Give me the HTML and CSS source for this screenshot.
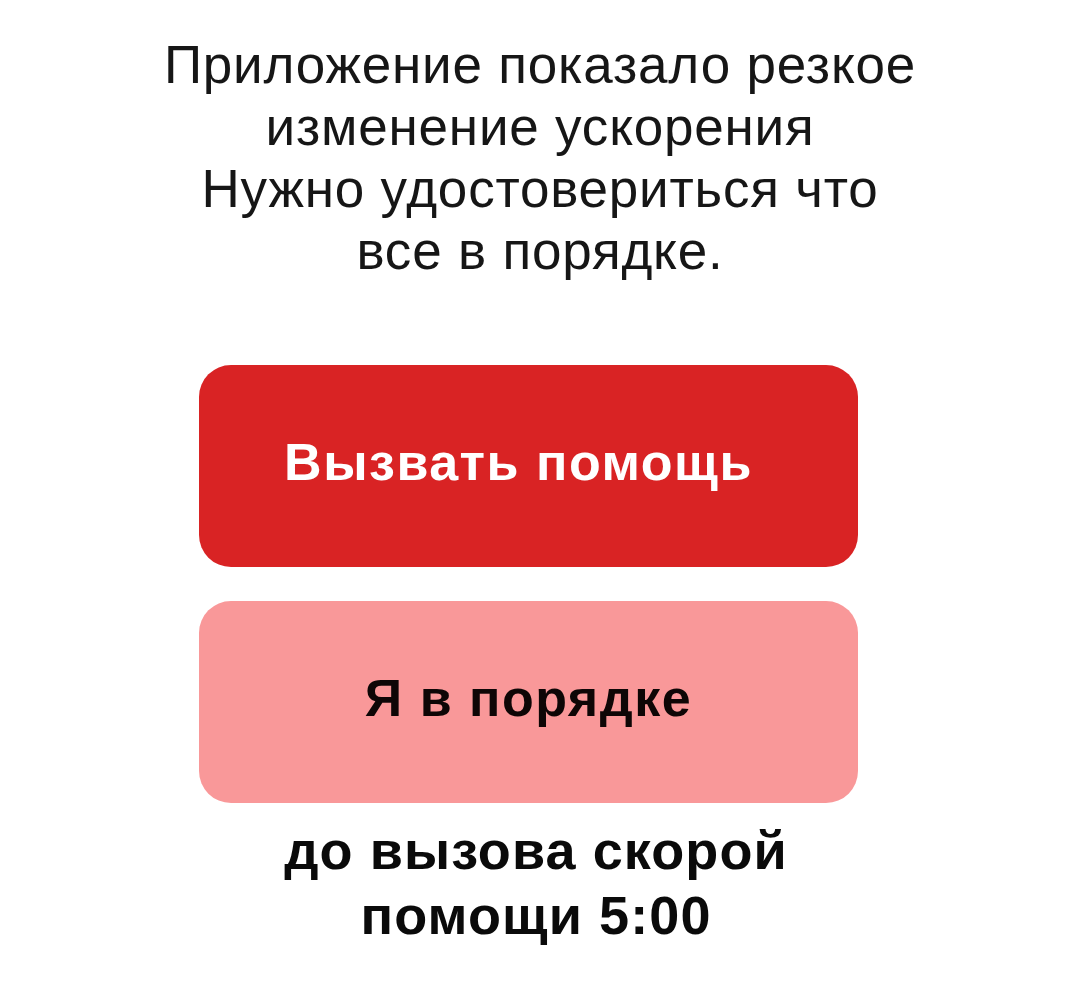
FILE: index.html
```html
<!DOCTYPE html>
<html lang="ru">
<head>
<meta charset="utf-8">
<title>Резкое изменение ускорения</title>
<link rel="stylesheet" href="styles.css">
</head>
<body>
<main class="screen">
  <p class="message">Приложение показало резкое<br>изменение ускорения<br>Нужно удостовериться что<br>все в порядке.</p>
  <div class="actions">
    <button class="btn btn-danger" type="button">Вызвать помощь</button>
    <button class="btn btn-soft" type="button">Я в порядке</button>
  </div>
  <p class="countdown">до вызова скорой<br>помощи 5:00</p>
</main>
</body>
</html>
```

FILE: styles.css
```css
* { box-sizing: border-box; }
html, body { margin: 0; padding: 0; background: #ffffff; }
body {
  width: 1080px;
  height: 982px;
  overflow: hidden;
  font-family: "Liberation Sans", Arial, sans-serif;
  color: #111111;
}
.screen {
  display: flex;
  flex-direction: column;
  align-items: center;
  padding-top: 34px;
}
.message {
  margin: 0;
  font-size: 53px;
  line-height: 62px;
  text-align: center;
  color: #161616;
  letter-spacing: 0.8px;
}
.actions {
  display: flex;
  flex-direction: column;
  gap: 34px;
  margin-top: 83px;
  width: 659px;
  align-self: flex-start;
  margin-left: 199px;
}
.btn {
  border: none;
  height: 202px;
  border-radius: 32px;
  font-family: "Liberation Sans", Arial, sans-serif;
  font-weight: 700;
  font-size: 52px;
  letter-spacing: 1.5px;
  padding: 0 0 8px;
}
.btn-danger {
  background: #d92324;
  color: #ffffff;
  padding-right: 20px;
}
.btn-soft {
  background: #f99899;
  color: #0e0606;
}
.countdown {
  margin: 15px 8px 0 0;
  font-size: 54px;
  font-weight: 700;
  line-height: 65px;
  text-align: center;
  color: #0a0a0a;
  letter-spacing: 1.1px;
}
```
